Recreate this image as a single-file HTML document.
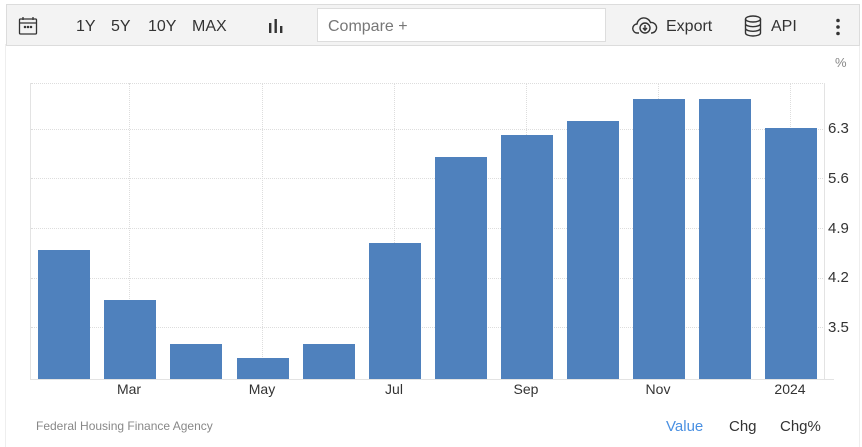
<!DOCTYPE html>
<html><head><style>
body{margin:0;width:862px;height:447px;background:#fff;font-family:"Liberation Sans",sans-serif;position:relative;overflow:hidden}
.a{position:absolute}
.tb{left:6px;top:4px;width:852px;height:40px;background:#f3f3f3;border:1px solid #dcdcdc}
.t{font-size:16px;color:#333;top:18px}
.bar{position:absolute;background:#4f81bd;width:52px;bottom:68px}
.gl{position:absolute;left:31px;width:794px;border-top:1px dotted #ddd;height:0}
.vl{position:absolute;top:83px;height:296px;border-left:1px dotted #ddd;width:0}
.yl{position:absolute;left:828px;font-size:15px;color:#333}
.xl{position:absolute;top:381px;font-size:14px;color:#333;width:60px;text-align:center}
</style></head><body>
<div class="a" style="left:5px;top:44px;width:0;height:403px;border-left:1px solid #eee"></div>
<div class="a" style="left:859px;top:44px;width:0;height:403px;border-left:1px solid #eee"></div>
<div class="a tb"></div>
<svg class="a" style="left:18px;top:16px" width="20" height="20" viewBox="0 0 20 20" fill="none" stroke="#333" stroke-width="1.3"><rect x="1.5" y="3" width="17" height="15" rx="1"/><line x1="1.5" y1="7" x2="18.5" y2="7"/><line x1="5" y1="1" x2="5" y2="4"/><line x1="15" y1="1" x2="15" y2="4"/><circle cx="7" cy="11" r=".6" fill="#333"/><circle cx="10" cy="11" r=".6" fill="#333"/><circle cx="13" cy="11" r=".6" fill="#333"/></svg>
<div class="a t" style="left:76px">1Y</div>
<div class="a t" style="left:111px">5Y</div>
<div class="a t" style="left:148px">10Y</div>
<div class="a t" style="left:192px">MAX</div>
<svg class="a" style="left:268px;top:18px" width="16" height="16"><rect x="1" y="5" width="2.4" height="10" fill="#333"/><rect x="6.5" y="1" width="2.4" height="14" fill="#333"/><rect x="12" y="8" width="2.4" height="7" fill="#333"/></svg>
<div class="a" style="left:317px;top:8px;width:287px;height:32px;background:#fff;border:1px solid #ddd"></div>
<div class="a" style="left:328px;top:18px;font-size:16px;color:#777">Compare +</div>
<svg class="a" style="left:632px;top:16px" width="26" height="20" viewBox="0 0 26 20" fill="none" stroke="#333" stroke-width="1.4"><path d="M7 17H5.5a4.5 4.5 0 0 1-.5-9 7 7 0 0 1 13.5-1.5A5 5 0 0 1 20 17h-1"/><circle cx="13" cy="12" r="5"/><path d="M13 9v5M11 12l2 2.2 2-2.2" /></svg>
<div class="a t" style="left:666px">Export</div>
<svg class="a" style="left:744px;top:15px" width="18" height="22" viewBox="0 0 18 22" fill="none" stroke="#333" stroke-width="1.4"><ellipse cx="9" cy="4" rx="7.5" ry="3"/><path d="M1.5 4v14c0 1.7 3.4 3 7.5 3s7.5-1.3 7.5-3V4M1.5 8.7c0 1.7 3.4 3 7.5 3s7.5-1.3 7.5-3M1.5 13.3c0 1.7 3.4 3 7.5 3s7.5-1.3 7.5-3"/></svg>
<div class="a t" style="left:771px">API</div>
<svg class="a" style="left:835px;top:18px" width="6" height="18"><circle cx="3" cy="2.5" r="1.8" fill="#333"/><circle cx="3" cy="9" r="1.8" fill="#333"/><circle cx="3" cy="15.5" r="1.8" fill="#333"/></svg>
<div class="a" style="left:835px;top:55px;font-size:13px;color:#888">%</div>
<div class="gl" style="top:83px"></div>
<div class="gl" style="top:129px"></div>
<div class="gl" style="top:178px"></div>
<div class="gl" style="top:228px"></div>
<div class="gl" style="top:278px"></div>
<div class="gl" style="top:327px"></div>
<div class="vl" style="left:129px"></div><div class="vl" style="left:262px"></div><div class="vl" style="left:394px"></div><div class="vl" style="left:526px"></div><div class="vl" style="left:658px"></div><div class="vl" style="left:790px"></div>
<div class="a" style="left:30px;top:83px;height:296px;border-left:1px solid #e3e3e3"></div>
<div class="a" style="left:824px;top:83px;height:296px;border-left:1px solid #e3e3e3"></div>
<div class="a" style="left:30px;top:379px;width:804px;border-top:1px solid #e3e3e3"></div>
<div class="bar" style="left:38px;top:250px"></div>
<div class="bar" style="left:104px;top:300px"></div>
<div class="bar" style="left:170px;top:344px"></div>
<div class="bar" style="left:237px;top:358px"></div>
<div class="bar" style="left:303px;top:344px"></div>
<div class="bar" style="left:369px;top:243px"></div>
<div class="bar" style="left:435px;top:157px"></div>
<div class="bar" style="left:501px;top:135px"></div>
<div class="bar" style="left:567px;top:121px"></div>
<div class="bar" style="left:633px;top:99px"></div>
<div class="bar" style="left:699px;top:99px"></div>
<div class="bar" style="left:765px;top:128px"></div>
<div class="yl" style="top:120px">6.3</div>
<div class="yl" style="top:170px">5.6</div>
<div class="yl" style="top:220px">4.9</div>
<div class="yl" style="top:269px">4.2</div>
<div class="yl" style="top:319px">3.5</div>
<div class="xl" style="left:99px">Mar</div>
<div class="xl" style="left:232px">May</div>
<div class="xl" style="left:364px">Jul</div>
<div class="xl" style="left:496px">Sep</div>
<div class="xl" style="left:628px">Nov</div>
<div class="xl" style="left:760px">2024</div>
<div class="a" style="left:36px;top:419px;font-size:12px;color:#888">Federal Housing Finance Agency</div>
<div class="a" style="left:666px;top:418px;font-size:15px;color:#4a90e2">Value</div>
<div class="a" style="left:729px;top:418px;font-size:15px;color:#333">Chg</div>
<div class="a" style="left:780px;top:418px;font-size:15px;color:#333">Chg%</div>
</body></html>
